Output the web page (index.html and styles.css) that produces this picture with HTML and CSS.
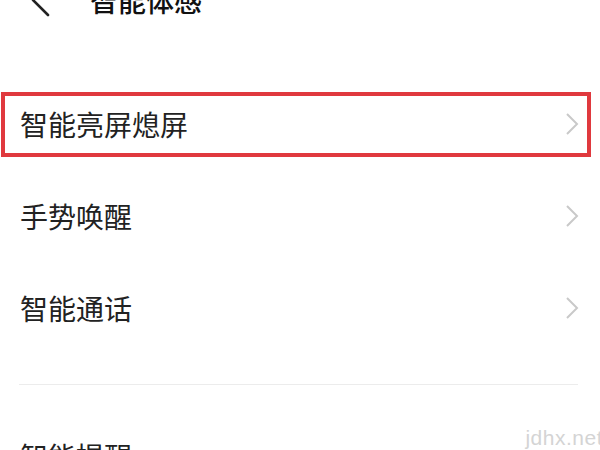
FILE: index.html
```html
<!DOCTYPE html>
<html lang="zh-CN">
<head>
<meta charset="utf-8">
<title>智能体感</title>
<link rel="stylesheet" href="styles.css">
</head>
<body>
<div class="screen">
  <header class="header">
    <span class="back">
      <svg width="24" height="34" viewBox="0 0 24 34"><polyline points="18,2 3,17 18,32" fill="none" stroke="#222" stroke-width="2.6" stroke-linecap="round" stroke-linejoin="round"/></svg>
    </span>
    <span class="title">智能体感</span>
  </header>
  <div class="list">
    <div class="row highlighted">
      <span class="label">智能亮屏熄屏</span>
      <svg class="chev" width="14" height="22" viewBox="0 0 14 22"><polyline points="2,1 12,11 2,21" fill="none" stroke="#c9c9c9" stroke-width="2"/></svg>
    </div>
    <div class="row">
      <span class="label">手势唤醒</span>
      <svg class="chev" width="14" height="22" viewBox="0 0 14 22"><polyline points="2,1 12,11 2,21" fill="none" stroke="#c9c9c9" stroke-width="2"/></svg>
    </div>
    <div class="row">
      <span class="label">智能通话</span>
      <svg class="chev" width="14" height="22" viewBox="0 0 14 22"><polyline points="2,1 12,11 2,21" fill="none" stroke="#c9c9c9" stroke-width="2"/></svg>
    </div>
  </div>
  <div class="divider"></div>
  <div class="list second">
    <div class="row">
      <span class="label">智能提醒</span>
    </div>
  </div>
  <div class="watermark">jdhx.net</div>
</div>
</body>
</html>
```
FILE: styles.css
```css
html, body {
  margin: 0;
  padding: 0;
  background: #fff;
}
.screen {
  position: relative;
  width: 600px;
  height: 450px;
  overflow: hidden;
  font-family: "Noto Sans CJK SC", "Noto Sans", sans-serif;
  color: #222;
}
.header {
  display: flex;
  align-items: center;
  height: 32px;
  margin-top: -16px;
  margin-bottom: 62px;
}
.back {
  display: flex;
  margin-left: 30px;
  width: 60px;
}
.title {
  font-size: 28px;
  line-height: 32px;
  font-weight: 500;
  color: #111;
}
.row {
  position: relative;
  display: flex;
  align-items: center;
  justify-content: space-between;
  height: 92px;
  padding: 0 20px 0 20px;
}
.label {
  font-size: 28px;
  line-height: 32px;
  color: #222;
}
.chev {
  margin-right: 1px;
}
.highlighted::after {
  content: "";
  position: absolute;
  left: 1px;
  right: 9px;
  top: 14px;
  bottom: 13px;
  border: 4px solid #e0393e;
}
.divider {
  height: 1px;
  background: #ececec;
  margin: 30px 22px 0 19px;
}
.second {
  margin-top: 25px;
}
.watermark {
  position: absolute;
  right: -3px;
  bottom: 0;
  font-family: "Liberation Sans", Arial, sans-serif;
  font-size: 21px;
  letter-spacing: 0.5px;
  color: #d4d4d4;
}
```
